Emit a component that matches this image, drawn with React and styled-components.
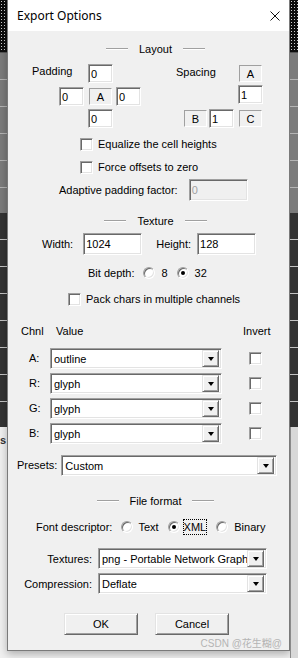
import React from "react";
import styled, { createGlobalStyle, css } from "styled-components";

const GlobalStyle = createGlobalStyle`
  html, body {
    margin: 0;
    padding: 0;
    background: #f0f0f0;
  }
  body {
    font-family: "Liberation Sans", Arial, sans-serif;
    font-size: 11px;
    color: #000;
  }
`;

// classic 3D edges
const sunken = css`
  box-sizing: border-box;
  border: 1px solid;
  border-color: #a0a0a0 #fff #fff #a0a0a0;
  box-shadow: inset 1px 1px 0 #696969, inset -1px -1px 0 #e3e3e3;
`;

const raised = css`
  box-sizing: border-box;
  border: 1px solid;
  border-color: #e3e3e3 #696969 #696969 #e3e3e3;
  box-shadow: inset 1px 1px 0 #fff, inset -1px -1px 0 #a0a0a0;
  background: #f0f0f0;
`;

const Desktop = styled.div`
  display: flex;
  align-items: flex-start;
  width: 298px;
  height: 658px;
  overflow: hidden;
  background: #f0f0f0;
`;

const Strip = styled.div`
  display: flex;
  flex-direction: column;
  flex: 0 0 ${(p) => p.$w}px;
  height: 658px;
  overflow: hidden;
`;

const Checker = styled.div`
  height: 53px;
  background: radial-gradient(#cfcfcf 0.6px, transparent 1px) 0 0 / 3px 3px, #0e0e0e;
  border-bottom: 1px solid #555;
  box-sizing: border-box;
`;

const GrayBand = styled.div`
  height: 160px;
  background: repeating-linear-gradient(to bottom, #7b7b7b 0 26px, #b4b4b4 26px 27px);
`;

const DarkBand = styled.div`
  height: 214px;
  background: repeating-linear-gradient(to bottom, #333 0 26px, #c4c4c4 26px 27px);
`;

const LightBand = styled.div`
  flex: 1;
  box-sizing: border-box;
  padding-top: 7px;
  font-size: 11px;
  font-weight: bold;
  color: #333;
  background: ${(p) => (p.$right ? "#d8d8d8" : "#f0f0f0")};
  border-left: ${(p) => (p.$right ? "1px solid #8a8a8a" : "none")};
`;

const Dialog = styled.div`
  flex: 0 0 283px;
  box-sizing: border-box;
  display: flex;
  flex-direction: column;
  border: 1px solid #7a7a7a;
  border-top: none;
  background: #f0f0f0;
  box-shadow: 0 3px 8px rgba(0, 0, 0, 0.28);
`;

const TitleBar = styled.div`
  display: flex;
  align-items: center;
  justify-content: space-between;
  height: 31px;
  padding: 0 9px;
  background: #fff;
`;

const TitleText = styled.span`
  font-family: "Noto Sans", "Liberation Sans", sans-serif;
  font-size: 12px;
  color: #000;
`;

const CloseIcon = () => (
  <svg width="10" height="10" viewBox="0 0 10 10">
    <path d="M0.5 0.5 L9.5 9.5 M9.5 0.5 L0.5 9.5" stroke="#111" strokeWidth="1" fill="none" />
  </svg>
);

const Body = styled.div`
  display: flex;
  flex-direction: column;
`;

const Row = styled.div`
  display: flex;
  align-items: ${(p) => p.$align || "center"};
  justify-content: ${(p) => p.$justify || "flex-start"};
  height: ${(p) => p.$h}px;
  margin-top: ${(p) => p.$mt || 0}px;
  padding-left: ${(p) => p.$pl || 0}px;
  padding-right: ${(p) => p.$pr || 0}px;
  gap: ${(p) => p.$gap || 0}px;
`;

const SectionHeader = styled.div`
  display: flex;
  align-items: center;
  justify-content: center;
  gap: 11px;
  height: 16px;
  margin-top: ${(p) => p.$mt}px;
  padding-left: 14px;
`;

const HeaderLine = styled.span`
  width: 22px;
  height: 1px;
  background: #a0a0a0;
  border-bottom: 1px solid #fff;
`;

const Text = styled.span`
  white-space: nowrap;
  line-height: ${(p) => p.$lh || 13}px;
  margin-left: ${(p) => p.$ml || 0}px;
  color: ${(p) => (p.$muted ? "#a0a0a0" : "#000")};
`;

const PadGrid = styled.div`
  display: grid;
  grid-template-columns: ${(p) => p.$cols};
  grid-template-rows: ${(p) => p.$rows};
`;

const Cell = styled.div`
  grid-column: ${(p) => p.$col};
  grid-row: ${(p) => p.$row};
  display: flex;
  align-items: flex-start;
  padding-top: ${(p) => p.$top || 0}px;
  padding-left: ${(p) => p.$left || 0}px;
`;

const TextBox = styled.div`
  ${sunken}
  display: flex;
  align-items: center;
  width: ${(p) => p.$w || 25}px;
  height: ${(p) => p.$h || 19}px;
  margin-left: ${(p) => p.$ml || 0}px;
  padding-left: 2px;
  background: ${(p) => (p.$disabled ? "#f0f0f0" : "#fff")};
  color: ${(p) => (p.$disabled ? "#a0a0a0" : "#000")};
`;

const StaticBox = styled.div`
  box-sizing: border-box;
  display: flex;
  align-items: center;
  justify-content: center;
  width: 23px;
  height: 17px;
  border: 1px solid;
  border-color: #a0a0a0 #fff #fff #a0a0a0;
`;

const CheckBox = styled.span`
  ${sunken}
  display: inline-block;
  flex: 0 0 13px;
  width: 13px;
  height: 13px;
  background: #fff;
`;

const Option = styled.span`
  display: inline-flex;
  align-items: center;
  gap: ${(p) => p.$gap || 6}px;
`;

const Radio = styled.span`
  ${sunken}
  position: relative;
  display: inline-block;
  width: 12px;
  height: 12px;
  border-radius: 50%;
  background: #fff;

  &::after {
    content: "";
    display: ${(p) => (p.$checked ? "block" : "none")};
    position: absolute;
    left: 3px;
    top: 3px;
    width: 4px;
    height: 4px;
    border-radius: 50%;
    background: #000;
  }
`;

const Focus = styled.span`
  padding: 1px 1px;
  outline: 1px dotted #000;
  outline-offset: -1px;
  line-height: 14px;
`;

const Combo = styled.div`
  ${sunken}
  display: flex;
  align-items: center;
  width: ${(p) => p.$w}px;
  height: 21px;
  padding: 2px 2px 2px 3px;
  background: #fff;
`;

const ComboText = styled.span`
  flex: 1;
  overflow: hidden;
  white-space: nowrap;
`;

const DropButton = styled.span`
  ${raised}
  display: flex;
  align-items: center;
  justify-content: center;
  flex: 0 0 17px;
  height: 17px;
`;

const Arrow = styled.span`
  width: 0;
  height: 0;
  border-left: 3.5px solid transparent;
  border-right: 3.5px solid transparent;
  border-top: 4px solid #000;
  margin-top: 1px;
`;

const ChannelGrid = styled.div`
  display: grid;
  grid-template-columns: 42px 172px 1fr;
  grid-auto-rows: ${(p) => p.$rowH}px;
  row-gap: 4px;
  align-items: center;
  margin-top: ${(p) => p.$mt}px;
`;

const GridText = styled(Text)`
  padding-left: ${(p) => p.$pl || 0}px;
`;

const GridCheck = styled(CheckBox)`
  margin-left: 27px;
`;

const FormLabel = styled.span`
  flex: 0 0 84px;
  text-align: right;
  white-space: nowrap;
`;

const Button = styled.div`
  ${raised}
  display: flex;
  align-items: center;
  justify-content: center;
  width: 74px;
  height: 22px;
`;

const Watermark = styled.span`
  font-family: "Liberation Sans", "Noto Sans CJK SC", sans-serif;
  font-size: 10px;
  color: #b4b4b4;
  line-height: 12px;
`;

const ComboBox = ({ value, width }) => (
  <Combo $w={width}>
    <ComboText>{value}</ComboText>
    <DropButton>
      <Arrow />
    </DropButton>
  </Combo>
);

const Header = ({ title, mt }) => (
  <SectionHeader $mt={mt}>
    <HeaderLine />
    <Text>{title}</Text>
    <HeaderLine />
  </SectionHeader>
);

const channels = [
  { name: "A:", value: "outline" },
  { name: "R:", value: "glyph" },
  { name: "G:", value: "glyph" },
  { name: "B:", value: "glyph" },
];

export default function App() {
  return (
    <>
      <GlobalStyle />
      <Desktop>
        <Strip $w={7}>
          <Checker />
          <GrayBand />
          <DarkBand />
          <LightBand>s</LightBand>
        </Strip>

        <Dialog>
          <TitleBar>
            <TitleText>Export Options</TitleText>
            <CloseIcon />
          </TitleBar>

          <Body>
            <Header title="Layout" mt={10} />

            <Row $h={64} $mt={7} $pl={24} $gap={35} $align="flex-start">
              <PadGrid $cols="27px 29px 28px 25px" $rows="23px 22px 19px">
                <Cell $col="1 / 3" $row="1">
                  <Text $lh={14}>Padding</Text>
                </Cell>
                <Cell $col="3" $row="1">
                  <TextBox>0</TextBox>
                </Cell>
                <Cell $col="2" $row="2">
                  <TextBox>0</TextBox>
                </Cell>
                <Cell $col="3" $row="2" $top={1} $left={1}>
                  <StaticBox>A</StaticBox>
                </Cell>
                <Cell $col="4" $row="2">
                  <TextBox>0</TextBox>
                </Cell>
                <Cell $col="3" $row="3">
                  <TextBox>0</TextBox>
                </Cell>
              </PadGrid>

              <PadGrid $cols="8px 25px 29px 25px" $rows="21px 24px 19px">
                <Cell $col="1 / 4" $row="1">
                  <Text $lh={16}>Spacing</Text>
                </Cell>
                <Cell $col="4" $row="1" $top={1} $left={1}>
                  <StaticBox>A</StaticBox>
                </Cell>
                <Cell $col="4" $row="2">
                  <TextBox>1</TextBox>
                </Cell>
                <Cell $col="2" $row="3" $top={1}>
                  <StaticBox>B</StaticBox>
                </Cell>
                <Cell $col="3" $row="3">
                  <TextBox>1</TextBox>
                </Cell>
                <Cell $col="4" $row="3" $top={1} $left={1}>
                  <StaticBox>C</StaticBox>
                </Cell>
              </PadGrid>
            </Row>

            <Row $h={13} $mt={10} $pl={72} $gap={5}>
              <CheckBox />
              <Text>Equalize the cell heights</Text>
            </Row>
            <Row $h={13} $mt={10} $pl={72} $gap={5}>
              <CheckBox />
              <Text>Force offsets to zero</Text>
            </Row>

            <Row $h={22} $mt={5} $pl={51} $gap={11}>
              <Text>Adaptive padding factor:</Text>
              <TextBox $w={59} $h={22} $disabled>
                0
              </TextBox>
            </Row>

            <Header title="Texture" mt={12} />

            <Row $h={22} $mt={4} $pl={34}>
              <Text>Width:</Text>
              <TextBox $w={59} $h={22} $ml={10}>
                1024
              </TextBox>
              <Text $ml={14}>Height:</Text>
              <TextBox $w={59} $h={22} $ml={6}>
                128
              </TextBox>
            </Row>

            <Row $h={16} $mt={10} $pl={80} $gap={9}>
              <Text>Bit depth:</Text>
              <Option>
                <Radio />
                <Text>8</Text>
              </Option>
              <Option>
                <Radio $checked />
                <Text>32</Text>
              </Option>
            </Row>

            <Row $h={13} $mt={12} $pl={60} $gap={5}>
              <CheckBox />
              <Text>Pack chars in multiple channels</Text>
            </Row>

            <ChannelGrid $rowH={14} $mt={18}>
              <GridText $pl={13}>Chnl</GridText>
              <GridText $pl={6}>Value</GridText>
              <GridText $pl={21}>Invert</GridText>
            </ChannelGrid>

            <ChannelGrid $rowH={21} $mt={10}>
              {channels.map((c) => (
                <React.Fragment key={c.name}>
                  <GridText $pl={21}>{c.name}</GridText>
                  <ComboBox value={c.value} width={172} />
                  <GridCheck />
                </React.Fragment>
              ))}
            </ChannelGrid>

            <Row $h={21} $mt={11} $pl={9} $gap={4}>
              <Text>Presets:</Text>
              <ComboBox value="Custom" width={216} />
            </Row>

            <Header title="File format" mt={17} />

            <Row $h={16} $mt={10} $pl={28} $gap={9}>
              <Text>Font descriptor:</Text>
              <Option $gap={5}>
                <Radio />
                <Text>Text</Text>
              </Option>
              <Option $gap={3}>
                <Radio $checked />
                <Focus>XML</Focus>
              </Option>
              <Option $gap={6}>
                <Radio />
                <Text>Binary</Text>
              </Option>
            </Row>

            <Row $h={21} $mt={13} $gap={6}>
              <FormLabel>Textures:</FormLabel>
              <ComboBox value="png - Portable Network Graphics" width={169} />
            </Row>
            <Row $h={21} $mt={4} $gap={6}>
              <FormLabel>Compression:</FormLabel>
              <ComboBox value="Deflate" width={169} />
            </Row>

            <Row $h={22} $mt={19} $pl={56} $gap={17}>
              <Button>OK</Button>
              <Button>Cancel</Button>
            </Row>

            <Row $h={12} $mt={3} $pr={7} $justify="flex-end">
              <Watermark>CSDN @花生糊@</Watermark>
            </Row>
          </Body>
        </Dialog>

        <Strip $w={8}>
          <Checker />
          <GrayBand />
          <DarkBand />
          <LightBand $right />
        </Strip>
      </Desktop>
    </>
  );
}
